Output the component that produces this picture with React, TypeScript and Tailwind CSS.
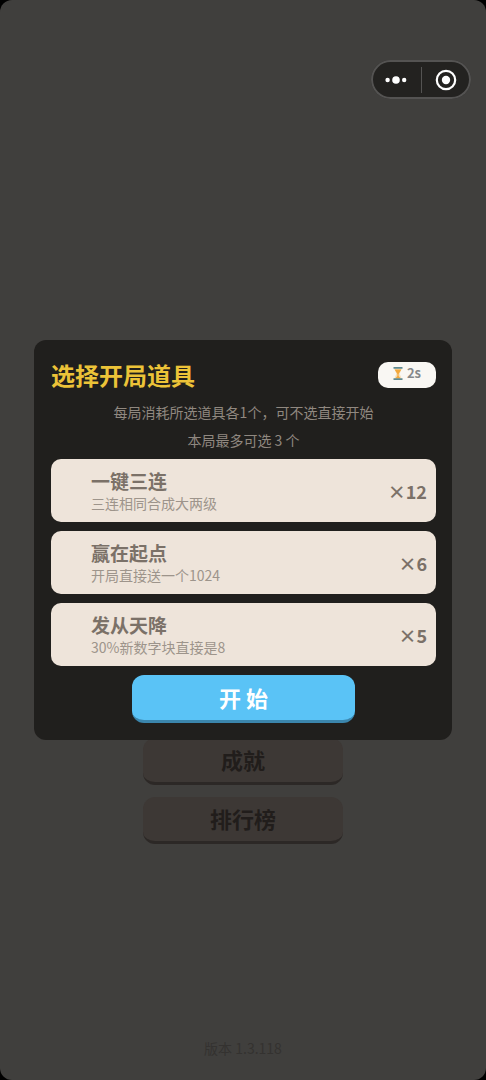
import React, { useState } from 'react';

interface Prop {
  id: string;
  name: string;
  description: string;
  count: number;
}

const props: Prop[] = [
  { id: 'triple', name: '一键三连', description: '三连相同合成大两级', count: 12 },
  { id: 'headstart', name: '赢在起点', description: '开局直接送一个1024', count: 6 },
  { id: 'skyfall', name: '发从天降', description: '30%新数字块直接是8', count: 5 },
];

const menuItems = ['成就', '排行榜'];

function CapsuleMenu() {
  return (
    <div className="flex h-[39px] w-[100px] items-center rounded-full bg-[#232220] ring-2 ring-[#545352] ring-inset">
      <button type="button" aria-label="更多" className="flex flex-1 justify-center">
        <svg width="22" height="10" viewBox="0 0 22 10" fill="#fff">
          <circle cx="2.6" cy="5" r="2.2" />
          <circle cx="11" cy="5" r="3.8" />
          <circle cx="19.2" cy="5" r="2.2" />
        </svg>
      </button>
      <div className="h-[26px] w-px bg-[#545352]" />
      <button type="button" aria-label="关闭" className="flex flex-1 justify-center">
        <svg width="22" height="22" viewBox="0 0 22 22" fill="none">
          <circle cx="11" cy="11" r="9.2" stroke="#fff" strokeWidth="2.2" />
          <circle cx="11" cy="11" r="4.2" fill="#fff" />
        </svg>
      </button>
    </div>
  );
}

function Hourglass() {
  return (
    <svg width="10" height="13" viewBox="0 0 10 13">
      <path d="M1.200 1.500h7.600L6.600 6.800 8.600 11.500H1.400L3.400 6.800z" fill="#f6dfb8" />
      <path d="M1.600 2.400h6.800L5.600 7v2l2 2.400H2.400l2-2.400V7z" fill="#f3a83c" />
      <path d="M0.500 0h9v1.700h-9zM0.500 11.300h9V13h-9z" fill="#5f8a91" />
    </svg>
  );
}

function PropCard({ prop, selected, onToggle }: { prop: Prop; selected: boolean; onToggle: () => void }) {
  return (
    <button
      type="button"
      aria-pressed={selected}
      onClick={onToggle}
      className="flex w-full items-center justify-between rounded-[10px] bg-[#eee4da] pt-[10px] pr-[9px] pb-[9px] pl-10 text-left text-[#7b7168]"
    >
      <span>
        <span className="block text-[19px] leading-6 font-bold">{prop.name}</span>
        <span className="block text-sm leading-5 text-[#9d948b]">{prop.description}</span>
      </span>
      <span className="text-lg leading-6 font-bold">×{prop.count}</span>
    </button>
  );
}

export default function App() {
  const [selected, setSelected] = useState<string[]>([]);

  const toggle = (id: string) =>
    setSelected((current) =>
      current.includes(id) ? current.filter((item) => item !== id) : [...current, id]
    );

  return (
    <div className="bg-black font-['Noto_Sans_CJK_SC','Noto_Sans',sans-serif]">
      <main className="flex min-h-screen flex-col rounded-xl bg-[#403f3d] pb-[22px]">
        <header className="flex justify-end pt-[60px] pr-[15px]">
          <CapsuleMenu />
        </header>

        <nav className="mt-auto flex flex-col items-center gap-3">
          {menuItems.map((item) => (
            <button
              key={item}
              type="button"
              className="h-[47px] w-[200px] rounded-xl border-b-[3px] border-[#2c2826] bg-[#3d3835] pb-0.5 text-[22px] leading-8 font-bold text-[#211d1b]"
            >
              {item}
            </button>
          ))}
        </nav>

        <footer className="mt-[194px] text-center text-sm leading-5 text-[#343230]">版本 1.3.118</footer>
      </main>

      {/* start dialog */}
      <div className="pointer-events-none fixed inset-0 flex items-center justify-center px-[34px]">
        <section
          role="dialog"
          aria-labelledby="dialog-title"
          className="pointer-events-auto flex w-full max-w-md flex-col rounded-xl bg-[#201f1d] pt-[17px] pr-4 pb-[17px] pl-[17px]"
        >
          <div className="flex items-center justify-between">
            <h1 id="dialog-title" className="text-2xl leading-9 font-bold text-[#ecc338]">
              选择开局道具
            </h1>
            <div className="flex h-[26px] items-center gap-1 rounded-[10px] bg-[#f9f7f3] px-[15px] pb-1 text-[13px] leading-5 font-bold text-[#85888a]">
              <Hourglass />
              2s
            </div>
          </div>

          <div className="my-[5px] text-center text-sm leading-7 text-[#908880]">
            <p>每局消耗所选道具各1个，可不选直接开始</p>
            <p>本局最多可选 3 个</p>
          </div>

          <div className="flex flex-col gap-[9px]">
            {props.map((prop) => (
              <PropCard
                key={prop.id}
                prop={prop}
                selected={selected.includes(prop.id)}
                onToggle={() => toggle(prop.id)}
              />
            ))}
          </div>

          <button
            type="button"
            className="mt-[9px] h-12 w-[223px] self-center rounded-xl border-b-[3px] border-[#3b86ad] bg-[#5ac3f6] pb-0.5 text-[22px] leading-8 font-bold text-white"
          >
            开 始
          </button>
        </section>
      </div>
    </div>
  );
}
